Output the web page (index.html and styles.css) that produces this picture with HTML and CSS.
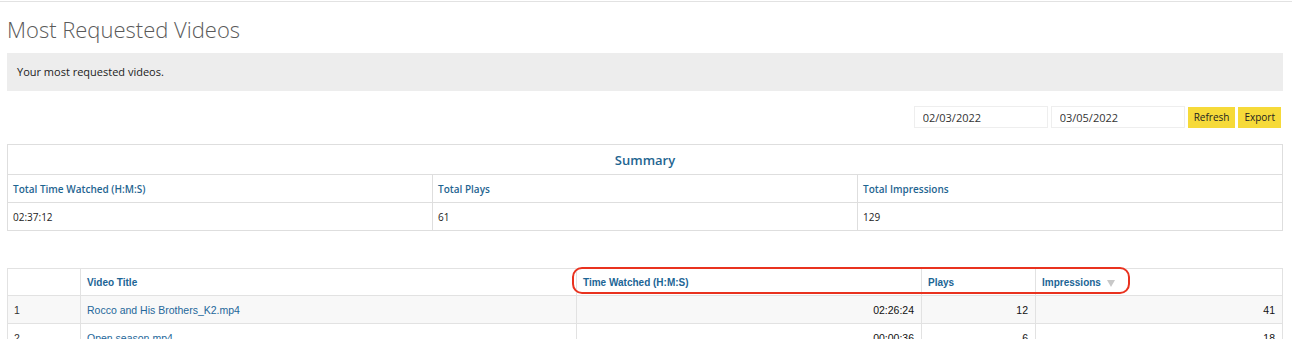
FILE: index.html
```html
<!DOCTYPE html>
<html lang="en">
<head>
    <meta charset="UTF-8">
    <title>Most Requested Videos</title>
    <link rel="stylesheet" href="styles.css">
</head>
<body>
    <div class="page">
        <h1 class="page-title">Most Requested Videos</h1>
        <div class="intro">Your most requested videos.</div>

        <div class="toolbar">
            <input class="date-input" type="text" value="02/03/2022">
            <input class="date-input" type="text" value="03/05/2022">
            <button class="btn">Refresh</button>
            <button class="btn">Export</button>
        </div>

        <table class="summary">
            <tr>
                <th colspan="3" class="summary-title">Summary</th>
            </tr>
            <tr>
                <th>Total Time Watched (H:M:S)</th>
                <th>Total Plays</th>
                <th>Total Impressions</th>
            </tr>
            <tr>
                <td>02:37:12</td>
                <td>61</td>
                <td>129</td>
            </tr>
        </table>

        <div class="videos-wrap">
            <table class="videos">
                <thead>
                    <tr>
                        <th class="col-num"></th>
                        <th class="col-title">Video Title</th>
                        <th class="col-time">Time Watched (H:M:S)</th>
                        <th class="col-plays">Plays</th>
                        <th>Impressions <span class="sort"></span></th>
                    </tr>
                </thead>
                <tbody>
                    <tr>
                        <td>1</td>
                        <td><a href="#">Rocco and His Brothers_K2.mp4</a></td>
                        <td class="num">02:26:24</td>
                        <td class="num">12</td>
                        <td class="num">41</td>
                    </tr>
                    <tr>
                        <td>2</td>
                        <td><a href="#">Open season.mp4</a></td>
                        <td class="num">00:00:36</td>
                        <td class="num">6</td>
                        <td class="num">18</td>
                    </tr>
                </tbody>
            </table>
            <div class="highlight"></div>
        </div>
    </div>
</body>
</html>
```

FILE: styles.css
```css
* {
    box-sizing: border-box;
}
body {
    margin: 0;
    font-family: 'Open Sans', sans-serif;
    color: #222;
    background: #fff;
    border-top: 1px solid #fff;
    overflow: hidden;
}
.page {
    border-top: 1px solid #e2e2e2;
    margin-right: 2px;
    padding: 0 9px 0 7px;
}
.page-title {
    font-size: 22px;
    font-weight: 300;
    color: #5a5a5a;
    margin: 16px 0 13px;
    line-height: 22px;
}
.intro {
    background: #ededed;
    height: 38px;
    line-height: 38px;
    padding-left: 10px;
    font-size: 11px;
}
.toolbar {
    display: flex;
    justify-content: flex-end;
    align-items: center;
    gap: 3px;
    margin-top: 15px;
    margin-right: 2px;
}
.date-input {
    width: 134px;
    height: 22px;
    border: 1px solid #eee;
    padding: 0 8px;
    font-family: 'Open Sans', sans-serif;
    font-size: 11px;
    color: #333;
    outline: none;
}
.btn {
    height: 21px;
    background: #f6da39;
    border: none;
    font-family: 'Open Sans', sans-serif;
    font-size: 10px;
    color: #222;
    padding: 0 6px;
}
.summary {
    width: 100%;
    border-collapse: collapse;
    margin-top: 16px;
    table-layout: fixed;
}
.summary th, .summary td {
    border: 1px solid #dedede;
    text-align: left;
    padding: 0 5px;
    font-size: 10px;
    height: 28px;
}
.summary th {
    color: #1f6591;
    font-weight: 600;
}
.summary td {
    font-size: 10px;
    color: #222;
}
.summary .summary-title {
    text-align: center;
    font-size: 13px;
    height: 30px;
    color: #1f6591;
}
.videos-wrap {
    position: relative;
    margin-top: 37px;
}
.videos {
    width: 100%;
    border-collapse: collapse;
    table-layout: fixed;
    font-family: 'Liberation Sans', Arial, sans-serif;
}
.videos th, .videos td {
    border: 1px solid #e2e2e2;
    text-align: left;
    padding: 0 6px;
    height: 28px;
    font-size: 10px;
}
.videos th {
    height: 27px;
    border-bottom: none;
    color: #1c6595;
    font-weight: bold;
}
.videos td {
    font-size: 10.5px;
    color: #333;
}
.videos tbody tr:nth-child(odd) td {
    background: #f8f8f8;
}
.videos td a {
    color: #24679a;
    text-decoration: none;
}
.videos .num {
    text-align: right;
    padding-right: 7px;
    color: #111;
}
.col-num {
    width: 73px;
}
.col-title {
    width: 496px;
}
.col-time {
    width: 345px;
}
.col-plays {
    width: 114px;
}
.sort {
    display: inline-block;
    width: 0;
    height: 0;
    margin-left: 3px;
    border-left: 4px solid transparent;
    border-right: 4px solid transparent;
    border-top: 7px solid #c8c8c8;
    vertical-align: -1px;
}
.highlight {
    position: absolute;
    left: 565px;
    top: -1px;
    width: 558px;
    height: 27px;
    border: 2px solid #e9321f;
    border-radius: 10px;
}
```
